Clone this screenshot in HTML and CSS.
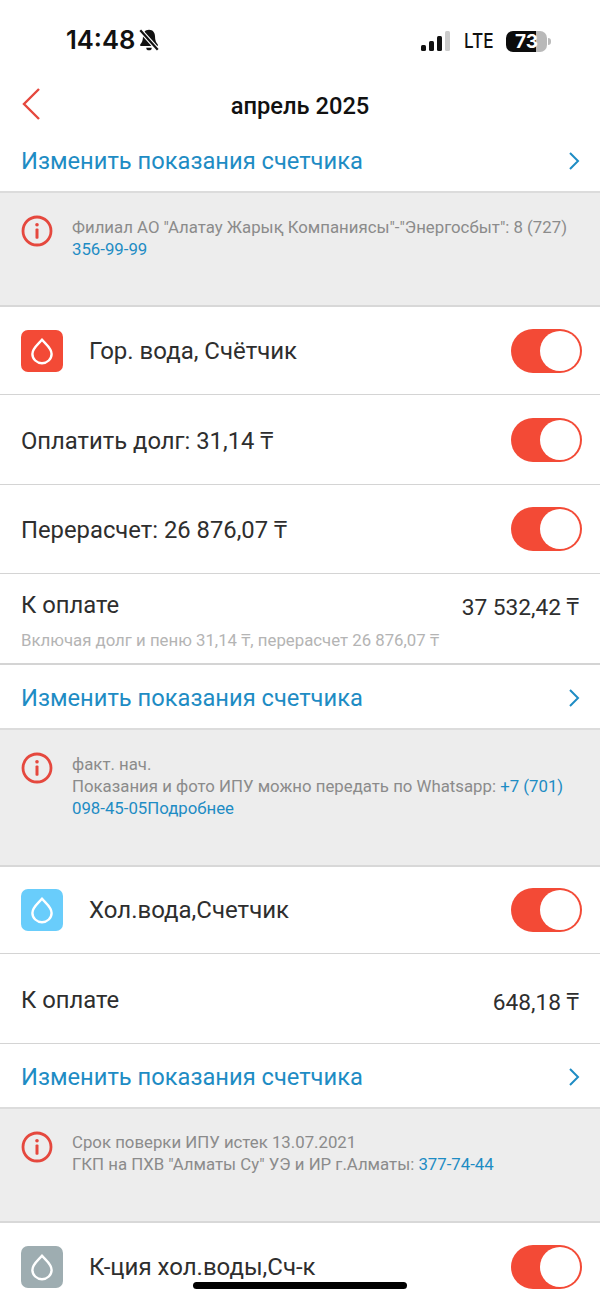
FILE: index.html
```html
<!DOCTYPE html>
<html lang="ru">
<head>
<meta charset="utf-8">
<title>апрель 2025</title>
<link rel="stylesheet" href="styles.css">
</head>
<body>
<svg class="defs" width="0" height="0" aria-hidden="true">
  <symbol id="info" viewBox="0 0 32 32">
    <circle cx="16" cy="16" r="14" fill="none" stroke="#e5483e" stroke-width="2.8"/>
    <circle cx="16" cy="9.800" r="1.800" fill="#e5483e"/>
    <rect x="14.500" y="13.400" width="3" height="10.400" rx="1" fill="#e5483e"/>
  </symbol>
  <symbol id="chev" viewBox="0 0 12 20">
    <path d="M2 2l8 8-8 8" fill="none" stroke="#1e8cc4" stroke-width="2"/>
  </symbol>
  <symbol id="drop" viewBox="0 0 24 28">
    <path d="M12 2.600C9.600 6.200 2.400 10.800 2.400 17a9.600 9.200 0 0 0 19.200 0C21.600 10.800 14.400 6.200 12 2.600z" fill="none" stroke="#fff" stroke-width="2.400" stroke-linejoin="round"/>
  </symbol>
</svg>
<main class="screen">
  <header class="status">
    <div class="status-left">
      <span class="clock">14:48</span>
      <svg class="bell" viewBox="0 0 20 22">
        <path d="M10 1.500c-3.600 0-5.500 2.700-5.500 6 0 4-1 5.700-2.500 7.500v1.500h16V15c-1.500-1.800-2.500-3.500-2.500-7.500 0-3.300-1.900-6-5.500-6z" fill="#111"/>
        <path d="M7.500 18a2.500 2.500 0 0 0 5 0z" fill="#111"/>
        <path d="M2 2l16 18" stroke="#fff" stroke-width="4"/>
        <path d="M2 2l16 18" stroke="#111" stroke-width="2"/>
      </svg>
    </div>
    <div class="status-right">
      <span class="signal">
        <i class="bar bar-1"></i><i class="bar bar-2"></i><i class="bar bar-3"></i><i class="bar bar-4"></i>
      </span>
      <span class="net">LTE</span>
      <span class="battery"><span class="battery-level">73</span></span>
      <span class="battery-cap"></span>
    </div>
  </header>

  <nav class="nav">
    <svg class="back" viewBox="0 0 20 34"><path d="M18 2L3 17l15 15" fill="none" stroke="#e5483e" stroke-width="2.400"/></svg>
    <h1 class="title">апрель 2025</h1>
  </nav>

  <a class="row link link-first">
    <span class="link-text">Изменить показания счетчика</span>
    <svg class="chev"><use href="#chev"/></svg>
  </a>

  <section class="notice notice-a">
    <svg class="info"><use href="#info"/></svg>
    <p class="notice-text">Филиал АО "Алатау Жарық Компаниясы"-"Энергосбыт": 8 (727) <span class="phone">356-99-99</span></p>
  </section>

  <div class="row service">
    <span class="tile tile-hot"><svg class="drop"><use href="#drop"/></svg></span>
    <span class="service-name">Гор. вода, Счётчик</span>
    <span class="toggle"></span>
  </div>
  <div class="row option">
    <span class="option-name">Оплатить долг: 31,14 ₸</span>
    <span class="toggle"></span>
  </div>
  <div class="row option option-tall">
    <span class="option-name">Перерасчет: 26 876,07 ₸</span>
    <span class="toggle"></span>
  </div>
  <div class="row pay pay-detail">
    <div class="pay-line">
      <span class="pay-label">К оплате</span>
      <span class="pay-sum">37 532,42 ₸</span>
    </div>
    <p class="pay-note">Включая долг и пеню 31,14 ₸, перерасчет 26 876,07 ₸</p>
  </div>
  <a class="row link">
    <span class="link-text">Изменить показания счетчика</span>
    <svg class="chev"><use href="#chev"/></svg>
  </a>

  <section class="notice notice-b">
    <svg class="info"><use href="#info"/></svg>
    <p class="notice-text">факт. нач.<br>Показания и фото ИПУ можно передать по Whatsapp: <span class="phone">+7 (701) 098-45-05Подробнее</span></p>
  </section>

  <div class="row service service-short">
    <span class="tile tile-cold"><svg class="drop"><use href="#drop"/></svg></span>
    <span class="service-name">Хол.вода,Счетчик</span>
    <span class="toggle"></span>
  </div>
  <div class="row pay pay-plain">
    <div class="pay-line">
      <span class="pay-label">К оплате</span>
      <span class="pay-sum">648,18 ₸</span>
    </div>
  </div>
  <a class="row link">
    <span class="link-text">Изменить показания счетчика</span>
    <svg class="chev"><use href="#chev"/></svg>
  </a>

  <section class="notice notice-c">
    <svg class="info"><use href="#info"/></svg>
    <p class="notice-text">Срок поверки ИПУ истек 13.07.2021<br>ГКП на ПХВ "Алматы Су" УЭ и ИР г.Алматы: <span class="phone">377-74-44</span></p>
  </section>

  <div class="row service">
    <span class="tile tile-grey"><svg class="drop"><use href="#drop"/></svg></span>
    <span class="service-name">К-ция хол.воды,Сч-к</span>
    <span class="toggle"></span>
  </div>

  <div class="home-indicator"></div>
</main>
</body>
</html>
```

FILE: styles.css
```css
* { box-sizing: border-box; }

html, body {
  margin: 0;
  padding: 0;
  background: #fff;
}

.defs { position: absolute; }

.screen {
  position: relative;
  width: 600px;
  height: 1300px;
  overflow: hidden;
  font-family: Roboto, "Noto Sans", sans-serif;
  color: #2e2e2e;
}

/* Status bar */
.status {
  height: 72px;
  padding: 26px 49px 0 66px;
  display: flex;
  justify-content: space-between;
  align-items: flex-start;
}
.status-left { display: flex; align-items: center; gap: 3px; }
.clock {
  font-family: Inter, sans-serif;
  font-size: 25.600px;
  font-weight: 600;
  line-height: 28px;
  color: #111;
}
.bell { width: 22px; height: 24px; }
.status-right { display: flex; align-items: center; height: 30px; }
.signal { display: flex; align-items: flex-end; gap: 3px; height: 20px; }
.bar { display: block; width: 5px; background: #111; border-radius: 1.500px; }
.bar-1 { height: 6px; }
.bar-2 { height: 10px; }
.bar-3 { height: 15px; }
.bar-4 { height: 20px; background: #ccc; }
.net {
  margin-left: 14px;
  font-family: Inter, sans-serif;
  font-size: 20px;
  font-weight: 500;
  color: #111;
  transform: scaleX(0.86);
  transform-origin: left center;
  width: 32px;
}
.battery {
  margin-left: 10px;
  width: 41px;
  height: 21px;
  border-radius: 7px;
  background: linear-gradient(90deg, #0c0c0c 0 73%, #b9b9b9 73%);
  display: flex;
  align-items: center;
  justify-content: center;
}
.battery-level {
  font-family: Inter, sans-serif;
  font-size: 19px;
  font-weight: 700;
  color: #fff;
}
.battery-cap {
  width: 3px;
  height: 7px;
  margin-left: 1px;
  border-radius: 0 3px 3px 0;
  background: #bbb;
}

/* Navigation bar */
.nav {
  position: relative;
  height: 66px;
  padding-top: 2px;
  display: flex;
  align-items: center;
  justify-content: center;
}
.back {
  position: absolute;
  left: 21px;
  top: 15px;
  width: 20px;
  height: 34px;
}
.title {
  margin: 0;
  font-size: 23.700px;
  font-weight: 500;
  color: #111;
}

/* List rows */
.row {
  display: flex;
  align-items: center;
  padding: 0 18px 0 21px;
  background: #fff;
  border-bottom: 1px solid #d4d4d4;
}
.link {
  height: 65px;
  justify-content: space-between;
  padding-top: 2px;
  padding-right: 20px;
  border-bottom: 2px solid #dcdcdc;
}
.link-first { height: 55px; padding-top: 0; padding-bottom: 7px; }
.link-text { font-size: 23.700px; color: #1e8cc4; }
.chev { width: 12px; height: 20px; }

.service { height: 88px; }
.service-short { height: 87px; }
.tile {
  width: 42px;
  height: 42px;
  border-radius: 7px;
  display: flex;
  align-items: center;
  justify-content: center;
}
.tile-hot { background: #f34a36; }
.tile-cold { background: #69cdfb; }
.tile-grey { background: #9eadb1; }
.drop { width: 24px; height: 28px; }
.service-name { margin-left: 26px; font-size: 24px; flex: 1; }

.option { height: 90px; }
.option-tall { height: 89px; }
.option-name { flex: 1; font-size: 23.800px; }

.toggle {
  position: relative;
  width: 71px;
  height: 44px;
  border-radius: 22px;
  background: #f34a36;
}
.toggle::after {
  content: "";
  position: absolute;
  top: 2px;
  right: 2px;
  width: 40px;
  height: 40px;
  border-radius: 50%;
  background: #fff;
}

.pay { flex-direction: column; align-items: stretch; justify-content: center; padding-right: 21px; }
.pay-line { display: flex; justify-content: space-between; align-items: center; }
.pay-label { font-size: 23.800px; }
.pay-sum { font-size: 22.700px; padding-top: 3px; }
.pay-detail { height: 91px; padding-top: 2px; border-bottom-width: 2px; }
.pay-plain { height: 90px; padding-top: 2px; }
.pay-note { margin: 6px 0 0; font-size: 16.800px; color: #b4b4b4; }

/* Notices */
.notice {
  display: flex;
  align-items: flex-start;
  padding: 22px 20px 0 21px;
  background: #ededed;
  border-bottom: 2px solid #d8d8d8;
}
.notice-a { height: 114px; }
.notice-b { height: 137px; }
.notice-c { height: 114px; }
.notice-c .notice-text { margin-top: 0; }
.info { width: 32px; height: 32px; flex: none; }
.notice-text {
  margin: 1px 0 0 19px;
  font-size: 16.800px;
  line-height: 22px;
  color: #8b8b8b;
}
.phone { color: #1e8cc4; }

.home-indicator {
  position: absolute;
  left: 193px;
  top: 1282px;
  width: 214px;
  height: 7px;
  border-radius: 4px;
  background: #000;
}
```
